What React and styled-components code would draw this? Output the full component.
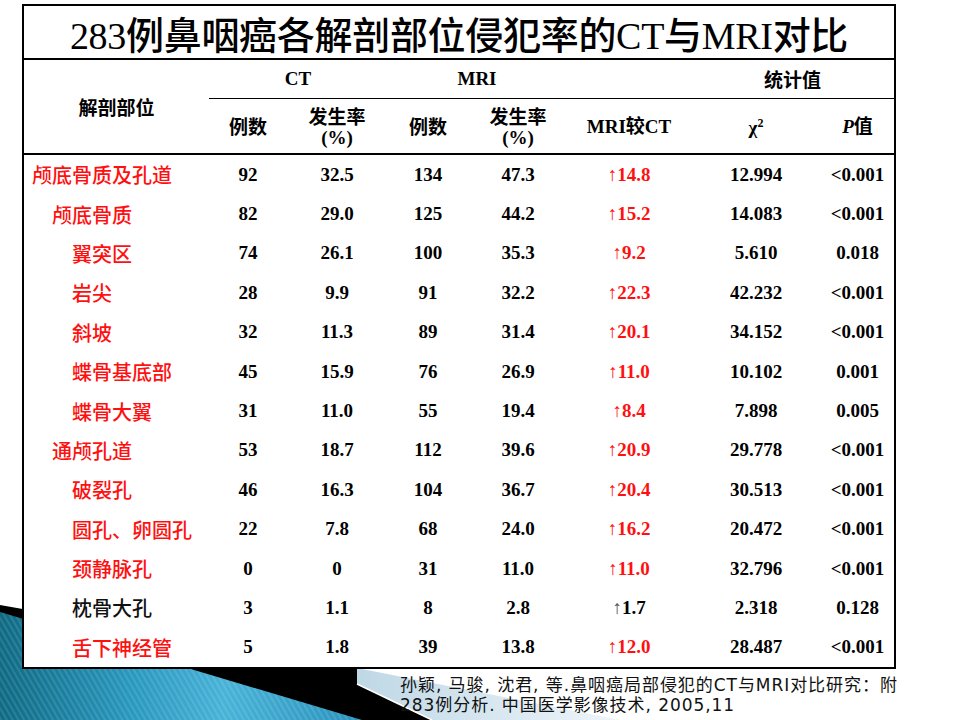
import styled, { createGlobalStyle } from 'styled-components';

const GlobalStyle = createGlobalStyle`
  body {
    margin: 0;
    background: #fff;
    font-family: "Liberation Serif", "Noto Sans CJK SC", serif;
  }
`;

const COLS = '185px 78px 100px 82px 98px 124px 130px 1fr';
const CJK = '"Noto Sans CJK SC", sans-serif';
const SERIF = '"Liberation Serif", "Noto Sans CJK SC", serif';
const RED = '#ff1010';

const Slide = styled.div`
  position: relative;
  width: 960px;
  height: 720px;
  overflow: hidden;
  background: #fff;
`;

const Backdrop = styled.svg`
  position: absolute;
  left: 0;
  top: 0;
  z-index: 0;
`;

const Content = styled.div`
  position: relative;
  z-index: 1;
  padding: 4px 0 0 22px;
`;

const TableBox = styled.div`
  width: 870px;
  border: 2px solid #000;
  background: #fff;
`;

const Title = styled.div`
  height: 52px;
  border-bottom: 2px solid #000;
  display: flex;
  align-items: center;
  justify-content: center;
  font-family: ${SERIF};
  font-size: 38px;
  font-weight: 500;
  color: #000;
  letter-spacing: -0.3px;
`;

const Head = styled.div`
  display: grid;
  grid-template-columns: ${COLS};
  grid-template-rows: 39px 54px;
  border-bottom: 2px solid #000;
`;

const HeadCell = styled.div`
  grid-column: ${(p) => p.$col};
  grid-row: ${(p) => p.$row};
  display: flex;
  flex-direction: column;
  align-items: center;
  justify-content: center;
  font-family: ${(p) => (p.$cjk ? CJK : SERIF)};
  font-size: 19px;
  font-weight: 700;
  line-height: 20px;
  color: #000;
  border-bottom: ${(p) => (p.$group ? '1px solid #000' : 'none')};
`;

const Line = styled.span`
  display: block;
  height: 20px;
  line-height: 20px;
  overflow: visible;
`;

const Pct = styled.span`
  font-family: ${SERIF};
  font-weight: 700;
  font-size: 19px;
`;

const Han = styled.span`
  font-family: ${CJK};
`;

const Italic = styled.span`
  font-family: ${SERIF};
  font-style: italic;
`;

const Sup = styled.sup`
  font-size: 12px;
`;

const Body = styled.div`
  display: flex;
  flex-direction: column;
`;

const Row = styled.div`
  display: grid;
  grid-template-columns: ${COLS};
  height: 39.4px;
  align-items: center;
`;

const Label = styled.div`
  padding-left: ${(p) => 8 + p.$level * 20}px;
  font-family: ${CJK};
  font-size: 20px;
  font-weight: 500;
  color: ${(p) => (p.$red ? RED : '#111')};
  white-space: nowrap;
`;

const Num = styled.div`
  text-align: center;
  font-family: ${SERIF};
  font-size: 19px;
  font-weight: 700;
  color: #000;
`;

const Diff = styled(Num)`
  color: ${(p) => (p.$red ? RED : '#000')};
`;

const Arrow = styled.span`
  font-weight: 400;
  color: ${(p) => (p.$red ? RED : '#555')};
`;

const Cite = styled.div`
  margin: 6px 0 0 378px;
  font-family: "DejaVu Sans", "Noto Sans CJK SC", sans-serif;
  font-size: 17px;
  line-height: 20px;
  letter-spacing: 0.95px;
  color: #111;
`;

const rows = [
  ['颅底骨质及孔道', 0, '92', '32.5', '134', '47.3', '14.8', '12.994', '<0.001', true],
  ['颅底骨质', 1, '82', '29.0', '125', '44.2', '15.2', '14.083', '<0.001', true],
  ['翼突区', 2, '74', '26.1', '100', '35.3', '9.2', '5.610', '0.018', true],
  ['岩尖', 2, '28', '9.9', '91', '32.2', '22.3', '42.232', '<0.001', true],
  ['斜坡', 2, '32', '11.3', '89', '31.4', '20.1', '34.152', '<0.001', true],
  ['蝶骨基底部', 2, '45', '15.9', '76', '26.9', '11.0', '10.102', '0.001', true],
  ['蝶骨大翼', 2, '31', '11.0', '55', '19.4', '8.4', '7.898', '0.005', true],
  ['通颅孔道', 1, '53', '18.7', '112', '39.6', '20.9', '29.778', '<0.001', true],
  ['破裂孔', 2, '46', '16.3', '104', '36.7', '20.4', '30.513', '<0.001', true],
  ['圆孔、卵圆孔', 2, '22', '7.8', '68', '24.0', '16.2', '20.472', '<0.001', true],
  ['颈静脉孔', 2, '0', '0', '31', '11.0', '11.0', '32.796', '<0.001', true],
  ['枕骨大孔', 2, '3', '1.1', '8', '2.8', '1.7', '2.318', '0.128', false],
  ['舌下神经管', 2, '5', '1.8', '39', '13.8', '12.0', '28.487', '<0.001', true],
];

function Decoration() {
  return (
    <Backdrop width="960" height="720" viewBox="0 0 960 720">
      <defs>
        <linearGradient id="teal" x1="0" y1="0" x2="1" y2="0">
          <stop offset="0" stopColor="#0f6a83" />
          <stop offset="0.35" stopColor="#2896bd" />
          <stop offset="0.62" stopColor="#48b2d7" />
          <stop offset="1" stopColor="#2a93bc" />
        </linearGradient>
        <linearGradient id="pale" x1="0" y1="0" x2="1" y2="0">
          <stop offset="0" stopColor="#bfd8e6" />
          <stop offset="1" stopColor="#eef5f9" />
        </linearGradient>
        <pattern id="stripes" width="5" height="5" patternUnits="userSpaceOnUse" patternTransform="rotate(-30)">
          <line x1="1" y1="0" x2="1" y2="5" stroke="rgba(255,255,255,0.16)" strokeWidth="1.4" />
        </pattern>
      </defs>
      <polygon points="0,605 357,668 357,684 432,720 0,720" fill="#000" />
      <polygon points="357,668 620,720 432,720 357,684" fill="url(#pale)" />
      <line x1="357" y1="684" x2="432" y2="720" stroke="#fff" strokeWidth="1.5" />
      <polygon points="0,612 362,720 0,720" fill="url(#teal)" />
      <polygon points="0,612 362,720 0,720" fill="url(#stripes)" />
    </Backdrop>
  );
}

export default function App() {
  return (
    <Slide>
      <GlobalStyle />
      <Decoration />
      <Content>
        <TableBox>
          <Title>283例鼻咽癌各解剖部位侵犯率的CT与MRI对比</Title>
          <Head>
            <HeadCell $col="1" $row="1 / 3" $cjk>解剖部位</HeadCell>
            <HeadCell $col="2 / 4" $row="1" $group>CT</HeadCell>
            <HeadCell $col="4 / 6" $row="1" $group>MRI</HeadCell>
            <HeadCell $col="6" $row="1" $group />
            <HeadCell $col="7 / 9" $row="1" $group $cjk>统计值</HeadCell>
            <HeadCell $col="2" $row="2" $cjk>例数</HeadCell>
            <HeadCell $col="3" $row="2" $cjk>
              <Line>发生率</Line>
              <Line><Pct>(%)</Pct></Line>
            </HeadCell>
            <HeadCell $col="4" $row="2" $cjk>例数</HeadCell>
            <HeadCell $col="5" $row="2" $cjk>
              <Line>发生率</Line>
              <Line><Pct>(%)</Pct></Line>
            </HeadCell>
            <HeadCell $col="6" $row="2">
              <span>MRI<Han>较</Han>CT</span>
            </HeadCell>
            <HeadCell $col="7" $row="2">
              <span>χ<Sup>2</Sup></span>
            </HeadCell>
            <HeadCell $col="8" $row="2" $cjk>
              <span><Italic>P</Italic>值</span>
            </HeadCell>
          </Head>
          <Body>
            {rows.map(([name, level, a, b, c, d, diff, chi, p, red]) => (
              <Row key={name}>
                <Label $level={level} $red={red}>{name}</Label>
                <Num>{a}</Num>
                <Num>{b}</Num>
                <Num>{c}</Num>
                <Num>{d}</Num>
                <Diff $red={red}><Arrow $red={red}>↑</Arrow>{diff}</Diff>
                <Num>{chi}</Num>
                <Num>{p}</Num>
              </Row>
            ))}
          </Body>
        </TableBox>
        <Cite>
          孙颖, 马骏, 沈君, 等.鼻咽癌局部侵犯的CT与MRI对比研究：附
          <br />
          283例分析. 中国医学影像技术, 2005,11
        </Cite>
      </Content>
    </Slide>
  );
}
